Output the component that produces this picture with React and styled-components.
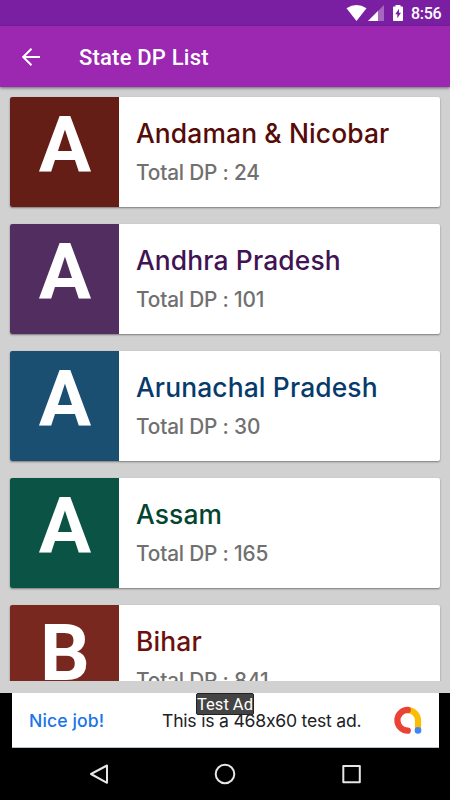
import React from 'react'
import styled, { createGlobalStyle } from 'styled-components'

const GlobalStyle = createGlobalStyle`
    * { box-sizing: border-box; }
    body {
        margin: 0;
        background: #d1d1d1;
        font-family: Roboto, "Liberation Sans", sans-serif;
    }
`;
const Screen = styled.div`
    width: 450px;
    height: 800px;
    display: flex;
    flex-direction: column;
    overflow: hidden;
    background: #d1d1d1;
`;
const StatusBar = styled.div`
    height: 26px;
    flex: none;
    display: flex;
    justify-content: flex-end;
    background: #7b1fa2;
`;
const StatusIcons = styled.svg`
    width: 66px;
    height: 26px;
`;
const Clock = styled.span`
    width: 39px;
    font-size: 16px;
    font-weight: 500;
    line-height: 28px;
    letter-spacing: -0.3px;
    color: #fff;
`;
const Toolbar = styled.header`
    height: 61px;
    flex: none;
    display: flex;
    align-items: center;
    gap: 38px;
    padding: 1px 0 0 21px;
    background: #9c27b0;
    box-shadow: 0 1px 3px rgba(0, 0, 0, 0.5);
    z-index: 1;
`;
const Title = styled.h1`
    margin: 1px 0 0;
    font-size: 22px;
    font-weight: 500;
    letter-spacing: 0.2px;
    line-height: 30px;
    color: #fff;
`;
const List = styled.div`
    height: 594px;
    flex: none;
    display: flex;
    flex-direction: column;
    gap: 17px;
    padding: 10.4px 10px 0;
    overflow: hidden;
`;
const Card = styled.div`
    height: 110px;
    flex: none;
    display: flex;
    border-radius: 2px;
    overflow: hidden;
    background: #fff;
    box-shadow: 0 1px 2px rgba(0, 0, 0, 0.42);
`;
const Tile = styled.div`
    width: 109px;
    padding: 0 0 12px 1px;
    display: flex;
    align-items: center;
    justify-content: center;
    background: ${p => p.$color};
    color: #fff;
    font-size: 78px;
    font-weight: 700;
    line-height: 94px;
`;
const Info = styled.div`
    flex: 1;
    padding: 18px 0 0 17px;
    font-family: Inter, "Noto Sans", sans-serif;
    white-space: nowrap;
`;
const Name = styled.div`
    font-size: 26.4px;
    font-weight: 500;
    line-height: 36px;
    letter-spacing: 0.14px;
    color: ${p => p.$color};
`;
const Total = styled.div`
    margin-top: 6px;
    font-size: 20.8px;
    font-weight: 500;
    line-height: 31px;
    letter-spacing: -0.18px;
    color: #707070;
`;
const AdArea = styled.div`
    height: 55px;
    margin-top: 12px;
    flex: none;
    padding: 0 11px 0 12px;
    background: #000;
`;
const Ad = styled.div`
    position: relative;
    height: 55px;
    display: flex;
    align-items: center;
    padding: 0 16px 0 17px;
    background: #fff;
    border: solid #b5c3ca;
    border-width: 0 0 1px;
    font-family: Inter, "Noto Sans", sans-serif;
    font-size: 17.6px;
    font-feature-settings: "calt" 0;
    white-space: nowrap;
`;
const AdHeadline = styled.span`
    width: 133px;
    font-weight: 500;
    letter-spacing: 0.1px;
    color: #1a73e8;
`;
const AdText = styled.span`
    flex: 1;
    letter-spacing: -0.22px;
    color: #202124;
`;
const AdLogo = styled.svg`
    width: 30px;
    height: 30px;
    flex: none;
`;
const AdBadge = styled.span`
    position: absolute;
    top: 0;
    left: 184px;
    width: 58px;
    height: 22px;
    border: 1px solid #222;
    border-radius: 2px;
    background: #444;
    color: #fff;
    font-family: Roboto, sans-serif;
    font-size: 16.5px;
    line-height: 22px;
    text-align: center;
`;
const NavBar = styled.nav`
    flex: 1;
    display: flex;
    justify-content: center;
    gap: 96px;
    padding-top: 11px;
    background: #000;
`;
const Icon = styled.svg`
    width: ${p => p.$size}px;
    height: ${p => p.$size}px;
    fill: none;
    stroke: ${p => p.$stroke};
    stroke-width: 2;
`;

const states = [
    { name: 'Andaman & Nicobar', total: 24, tile: '#641e16', text: '#560b08' },
    { name: 'Andhra Pradesh', total: 101, tile: '#512e5f', text: '#3f1354' },
    { name: 'Arunachal Pradesh', total: 30, tile: '#1b4f72', text: '#063b6c' },
    { name: 'Assam', total: 165, tile: '#0b5345', text: '#04452f' },
    { name: 'Bihar', total: 841, tile: '#78281f', text: '#6c100d' },
]

const App = () => {
    return (
        <Screen>
            <GlobalStyle />
            <StatusBar>
                <StatusIcons viewBox="345 0 66 26">
                    <path d="M346.5 8.3Q356.5 1.8 366.5 8.3L356.5 21Z" fill="#fff" />
                    <path d="M384 5V21H368Z" fill="#fff" opacity=".32" />
                    <path d="M378 11V21H368Z" fill="#fff" />
                    <path d="M395.5 5H400.5V6.5H402.2Q403 6.5 403 7.3V20.2Q403 21 402.2 21H393.8Q393 21 393 20.2V7.3Q393 6.5 393.8 6.5H395.5Z" fill="#fff" />
                    <path d="M399 8.8L395.3 14.3H397.3V18.3L401 12.7H399Z" fill="#7b1fa2" />
                </StatusIcons>
                <Clock>8:56</Clock>
            </StatusBar>
            <Toolbar>
                <Icon $size={20} $stroke="#fff" viewBox="0 0 20 20">
                    <path d="M19 10H2.5M10.5 1.7L2.2 10L10.5 18.3" />
                </Icon>
                <Title>State DP List</Title>
            </Toolbar>
            <List>
                {states.map(s => (
                    <Card key={s.name}>
                        <Tile $color={s.tile}>{s.name[0]}</Tile>
                        <Info>
                            <Name $color={s.text}>{s.name}</Name>
                            <Total>Total DP : {s.total}</Total>
                        </Info>
                    </Card>
                ))}
            </List>
            <AdArea>
                <Ad>
                    <AdHeadline>Nice job!</AdHeadline>
                    <AdText>This is a 468x60 test ad.</AdText>
                    <AdLogo viewBox="0 0 30 30" fill="none" strokeWidth="6.2" strokeLinecap="round">
                        <path d="M14.6 5.1A10.4 10.4 0 0 1 25 15.5V25" stroke="#fbbc04" />
                        <path d="M14.8 4.9A10.4 10.4 0 0 0 14.8 25.7" stroke="#ea4335" />
                        <circle cx="25" cy="25.4" r="3.3" fill="#4285f4" />
                    </AdLogo>
                    <AdBadge>Test Ad</AdBadge>
                </Ad>
            </AdArea>
            <NavBar>
                <Icon $size={30} $stroke="#e6e6e6" viewBox="0 0 30 30" strokeLinejoin="round">
                    <path d="M7 15L23 6.5V23.8Z" />
                </Icon>
                <Icon $size={30} $stroke="#e6e6e6" viewBox="0 0 30 30">
                    <circle cx="15" cy="15" r="9.3" />
                </Icon>
                <Icon $size={30} $stroke="#e6e6e6" viewBox="0 0 30 30" strokeLinejoin="round">
                    <rect x="7.3" y="7" width="16.5" height="16.3" />
                </Icon>
            </NavBar>
        </Screen>
    )
}

export default App
